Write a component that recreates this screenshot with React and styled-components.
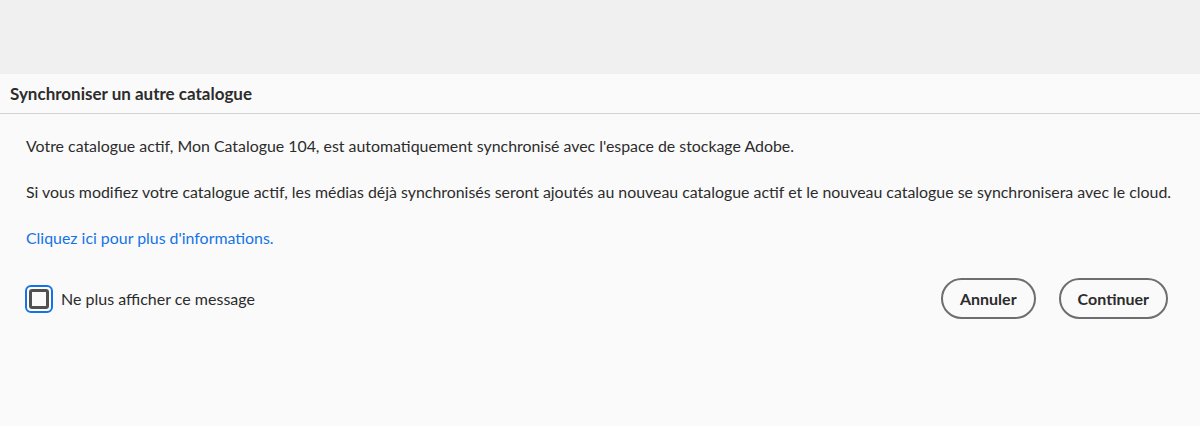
import styled, { createGlobalStyle } from 'styled-components';

const GlobalStyle = createGlobalStyle`
    html, body {
        margin: 0;
        padding: 0;
        background: #f0f0f0;
    }
    body {
        font-family: Lato, "Noto Sans", sans-serif;
        color: #2c2c2c;
    }
`;

const Page = styled.div`
    width: 1200px;
    height: 426px;
    display: flex;
    flex-direction: column;
    background: #f0f0f0;
`;

const TopBand = styled.div`
    height: 74px;
    flex-shrink: 0;
`;

const Dialog = styled.div`
    flex: 1;
    background: #fafafa;
    display: flex;
    flex-direction: column;
`;

const Header = styled.div`
    height: 40px;
    border-bottom: 1px solid #d3d3d3;
    display: flex;
    align-items: center;
    padding: 0 10px;
    box-sizing: border-box;
`;

const Title = styled.h2`
    margin: 0;
    font-size: 17px;
    font-weight: 700;
    color: #2c2c2c;
`;

const Body = styled.div`
    padding: 20px 32px 0 26px;
    display: flex;
    flex-direction: column;
    gap: 22px;
`;

const Text = styled.p`
    margin: 0;
    font-size: 15.9px;
    line-height: 24px;
    white-space: nowrap;
    color: #2c2c2c;
`;

const Link = styled.a`
    font-size: 15.9px;
    line-height: 24px;
    color: #1473e6;
    text-decoration: none;
    cursor: pointer;
`;

const Footer = styled.div`
    display: flex;
    justify-content: space-between;
    align-items: center;
    margin-top: 6px;
`;

const CheckLabel = styled.label`
    display: flex;
    align-items: center;
    gap: 8px;
    font-size: 16px;
    color: #2c2c2c;
    cursor: pointer;
`;

const FocusRing = styled.span`
    width: 28px;
    height: 28px;
    box-sizing: border-box;
    border: 2px solid #1473e6;
    border-radius: 6px;
    display: flex;
    align-items: center;
    justify-content: center;
    margin-left: -1px;
    background: #ffffff;
`;

const Box = styled.span`
    width: 20px;
    height: 20px;
    box-sizing: border-box;
    border: 3px solid #505050;
    border-radius: 3px;
    background: #fafafa;
`;

const Buttons = styled.div`
    display: flex;
    gap: 23px;
`;

const Button = styled.button`
    height: 41px;
    padding: 0 17px;
    border: 2px solid #6e6e6e;
    border-radius: 21px;
    background: transparent;
    font-family: inherit;
    font-size: 16px;
    font-weight: 700;
    color: #2c2c2c;
    cursor: pointer;
`;

export default function App() {
    return (
        <Page>
            <GlobalStyle />
            <TopBand />
            <Dialog>
                <Header>
                    <Title>Synchroniser un autre catalogue</Title>
                </Header>
                <Body>
                    <Text>
                        Votre catalogue actif, Mon Catalogue 104, est automatiquement synchronisé avec l'espace de stockage Adobe.
                    </Text>
                    <Text>
                        Si vous modifiez votre catalogue actif, les médias déjà synchronisés seront ajoutés au nouveau catalogue actif et le nouveau catalogue se synchronisera avec le cloud.
                    </Text>
                    <div>
                        <Link>Cliquez ici pour plus d'informations.</Link>
                    </div>
                    <Footer>
                        <CheckLabel>
                            <FocusRing>
                                <Box />
                            </FocusRing>
                            Ne plus afficher ce message
                        </CheckLabel>
                        <Buttons>
                            <Button>Annuler</Button>
                            <Button>Continuer</Button>
                        </Buttons>
                    </Footer>
                </Body>
            </Dialog>
        </Page>
    );
}
